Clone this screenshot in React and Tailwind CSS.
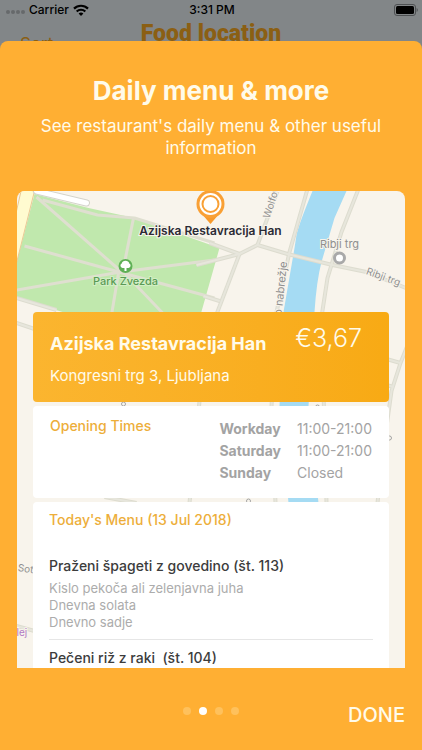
const hours = [
  { day: "Workday", time: "11:00-21:00" },
  { day: "Saturday", time: "11:00-21:00" },
  { day: "Sunday", time: "Closed" },
];

const dishes = [
  {
    name: "Praženi špageti z govedino (št. 113)",
    sides: ["Kislo pekoča ali zelenjavna juha", "Dnevna solata", "Dnevno sadje"],
  },
  {
    name: "Pečeni riž z raki  (št. 104)",
    sides: [],
  },
];

const parkPaths = [
  "M20 6 104 80",
  "M26 9 81 24 118 27 198 52",
  "M117 27 107 77",
  "M8 55 106 82 198 107",
  "M0 99 104 81 198 69",
  "M102 82 95 124",
  "M108 82 148 124",
];

const streets = [
  "M0 107 40 119",
  "M0 132 18 138",
  "M264 -8 241 54",
  "M193 52 223 63",
  "M180 74 223 63 241 54 271 63 316 74 350 81 392 98",
  "M223 63 199 126",
  "M187 105 203 110",
  "M291 -2 273 61 259 126 255 216 259 312",
  "M342 -2 325 41 311 87 305 126 310 312",
  "M370 168 384 172",
  "M392 152 384 172 375 200 368 250 361 312",
  "M184 200 173 312",
  "M370 194 377 196",
  "M88 306 120 312",
  "M0 435 18 440",
];

function MapView() {
  return (
    <svg
      className="absolute inset-0 w-full h-full"
      viewBox="0 0 389 477"
      preserveAspectRatio="xMidYMin slice"
      fontFamily="Inter, sans-serif"
      fontSize="11"
      aria-hidden="true"
    >
      <rect width="389" height="477" fill="#f8f4ec" />
      <path d="M18 3 72 17 118 27 203 57 184 124 56 124 0 107V72Z" fill="#c0e8ad" />
      <path d="M5-2 0 20V72L18 0Z" fill="#fffbd0" stroke="#e9c994" strokeWidth="1" />

      <g fill="none" stroke="#dfdfd0" strokeWidth="3" strokeLinejoin="round">
        {parkPaths.map(d => <path key={d} d={d} />)}
      </g>
      <path d="M20 0 70 12" stroke="#d4d4cc" strokeWidth="7" strokeLinecap="round" />
      <path d="M20 0 70 12" stroke="#fff" strokeWidth="5" strokeLinecap="round" />

      <path
        d="M296 0Q282 34 280 44L278 57 267 121 263 215 272 312H302L292 215 298 121Q300 90 305 71L318 27 330 0Z"
        fill="#a5dbf3"
      />
      <g fill="none" stroke="#dddccf" strokeWidth="4" strokeLinejoin="round">
        {streets.map(d => <path key={d} d={d} />)}
      </g>
      <g fill="none" stroke="#e7e6dc" strokeWidth="2" strokeLinejoin="round">
        {streets.map(d => <path key={d} d={d} />)}
      </g>

      <g fill="#f8f4ec" stroke="#a5a5a5" strokeWidth="1">
        <circle cx="107" cy="213" r="2" />
        <circle cx="301" cy="216" r="2" />
        <circle cx="232" cy="310" r="2" />
        <circle cx="373" cy="247" r="2" />
      </g>

      <circle cx="109" cy="75" r="7" fill="#5fb056" />
      <path
        d="M106 77a2.4 2.4 0 0 1-.8-4.5 3.9 3.4 0 0 1 7.6 0 2.4 2.4 0 0 1-.8 4.5h-2v3h-2v-3Z"
        fill="#fff"
      />
      <circle cx="323" cy="67" r="5" fill="#fff" stroke="#a9a9a9" strokeWidth="3" />

      <g stroke="#f8f4ec" strokeWidth="2" paintOrder="stroke" fill="#8f8f8f">
        <text x="323" y="57" textAnchor="middle">Ribji trg</text>
        <text x="349" y="83" transform="rotate(20 349 83)" fontSize="10">Ribji trg</text>
        <text x="253" y="28" transform="rotate(-72 253 28)" fontSize="10">Wolfova</text>
        <text x="265" y="125" transform="rotate(-84 265 125)">o nabrežje</text>
        <text x="1" y="380" transform="rotate(8 1 380)" fontSize="10">Sot</text>
        <text x="0" y="445" fontSize="10" fill="#b27ac4">lej</text>
      </g>
      <text x="109" y="94" textAnchor="middle" fill="#5a9a55" fontWeight="500" stroke="#d3efc5" strokeWidth="2" paintOrder="stroke">
        Park Zvezda
      </text>

      <path d="M182 19 194 33 206 19Z" fill="#f79a2c" />
      <circle cx="194" cy="13" r="14" fill="#f9a035" />
      <circle cx="194" cy="13" r="10" fill="none" stroke="#fff" strokeWidth="2" />
      <circle cx="194" cy="13" r="7" fill="#fff" />
      <text x="194" y="44" textAnchor="middle" fill="#2b2b35" fontSize="12" fontWeight="600" stroke="#f8f4ec" strokeWidth="2" paintOrder="stroke">
        Azijska Restavracija Han
      </text>
    </svg>
  );
}

function StatusBar() {
  return (
    <div className="grid grid-cols-3 items-center h-5 pl-1.5 pr-1 text-xs font-medium text-black">
      <div className="flex items-center gap-1">
        <div className="flex gap-px pt-1">
          {[0, 1, 2, 3].map(i => (
            <span key={i} className="w-1 h-1 rounded-full bg-[#66696b]" />
          ))}
        </div>
        <span>Carrier</span>
        <svg className="w-4 h-3" viewBox="0 0 16 12" fill="none" stroke="#000" strokeWidth="2.2">
          <path d="M1 4.6a10 10 0 0 1 14 0" />
          <path d="M3.7 7.5a6.2 6.2 0 0 1 8.6 0" />
          <path d="M8 12 5.6 9.5a3.6 3.6 0 0 1 4.8 0Z" fill="#000" stroke="none" />
        </svg>
      </div>
      <span className="text-center">3:31 PM</span>
      <svg className="w-6 h-3 justify-self-end" viewBox="0 0 24 12">
        <rect x=".5" y=".5" width="21" height="11" rx="2.5" fill="none" stroke="#4e5153" />
        <rect x="2" y="2" width="18" height="8" rx="1.5" />
        <path d="M22.6 4v4q1.2-.6 1.2-2t-1.2-2Z" fill="#4e5153" />
      </svg>
    </div>
  );
}

function App() {
  return (
    <div className="h-screen flex flex-col overflow-hidden bg-[#828688] font-['Inter',sans-serif]">
      <header className="h-[41px] shrink-0 overflow-hidden">
        <StatusBar />
        <div className="grid grid-cols-[1fr_auto_1fr] text-[#8b5f13]">
          <span className="pl-5 pt-3 text-[17px] leading-6">Sort</span>
          <span className="whitespace-nowrap text-[23px] leading-7 font-black font-['Roboto',sans-serif]">
            Food location
          </span>
        </div>
      </header>

      <main className="flex-1 min-h-0 flex flex-col rounded-t-lg bg-[#ffaf33] px-[17px] pt-8 text-[#fffbea]">
        <h1 className="text-center text-[26px] leading-9 font-bold">Daily menu & more</h1>
        <p className="mt-1.5 mb-8 text-center text-[17px] leading-[22px]">
          See restaurant's daily menu & other useful information
        </p>

        <section className="relative flex-1 min-h-0 overflow-hidden rounded-t-lg">
          <MapView />

          <div className="relative flex flex-col gap-1 px-4 pt-[121px]">
            <div className="rounded bg-linear-to-r from-[#fbb52f] to-[#f8aa14] px-[17px] pt-3 pb-3.5">
              <div className="flex items-start justify-between pr-2.5">
                <h2 className="pt-1.5 text-lg leading-7 font-bold">Azijska Restavracija Han</h2>
                <span className="text-[25px] leading-7 font-light">€3,67</span>
              </div>
              <p className="mt-1.5 text-[15px] leading-6">Kongresni trg 3, Ljubljana</p>
            </div>

            <div className="flex justify-between rounded bg-white px-[17px] pt-3 pb-3.5">
              <h3 className="text-sm leading-4 font-medium text-[#edae3a]">Opening Times</h3>
              <table className="text-sm text-[#a3a3a3]">
                <tbody>
                  {hours.map(h => (
                    <tr key={h.day} className="h-[22px]">
                      <th scope="row" className="p-0 pr-4 text-left font-bold">{h.day}</th>
                      <td className="p-0">{h.time}</td>
                    </tr>
                  ))}
                </tbody>
              </table>
            </div>

            <div className="rounded-t bg-white px-4 pt-2">
              <h3 className="text-sm leading-5 font-medium text-[#edae3a]">Today's Menu (13 Jul 2018)</h3>
              <ul className="pt-[18px]">
                {dishes.map(dish => (
                  <li key={dish.name} className="border-b border-[#e6e6e6] pt-2 pb-2">
                    <h4 className="text-sm leading-5 font-medium whitespace-pre text-[#3c3c3c]">{dish.name}</h4>
                    <div className="pt-1 text-[13px] leading-[17px] text-[#acacac]">
                      {dish.sides.map(side => <p key={side}>{side}</p>)}
                    </div>
                  </li>
                ))}
              </ul>
            </div>
          </div>
        </section>

        <footer className="grid grid-cols-3 items-center shrink-0 h-[82px] pt-1">
          <div className="col-start-2 flex justify-center gap-2">
            {[0, 1, 2, 3].map(i => (
              <button
                key={i}
                aria-label={`Page ${i + 1}`}
                className={i === 1 ? "w-2 h-2 rounded-full bg-white" : "w-2 h-2 rounded-full bg-[#ffc15c]"}
              />
            ))}
          </div>
          <button className="justify-self-end pt-2 text-xl font-medium">DONE</button>
        </footer>
      </main>
    </div>
  );
}

export default App;
